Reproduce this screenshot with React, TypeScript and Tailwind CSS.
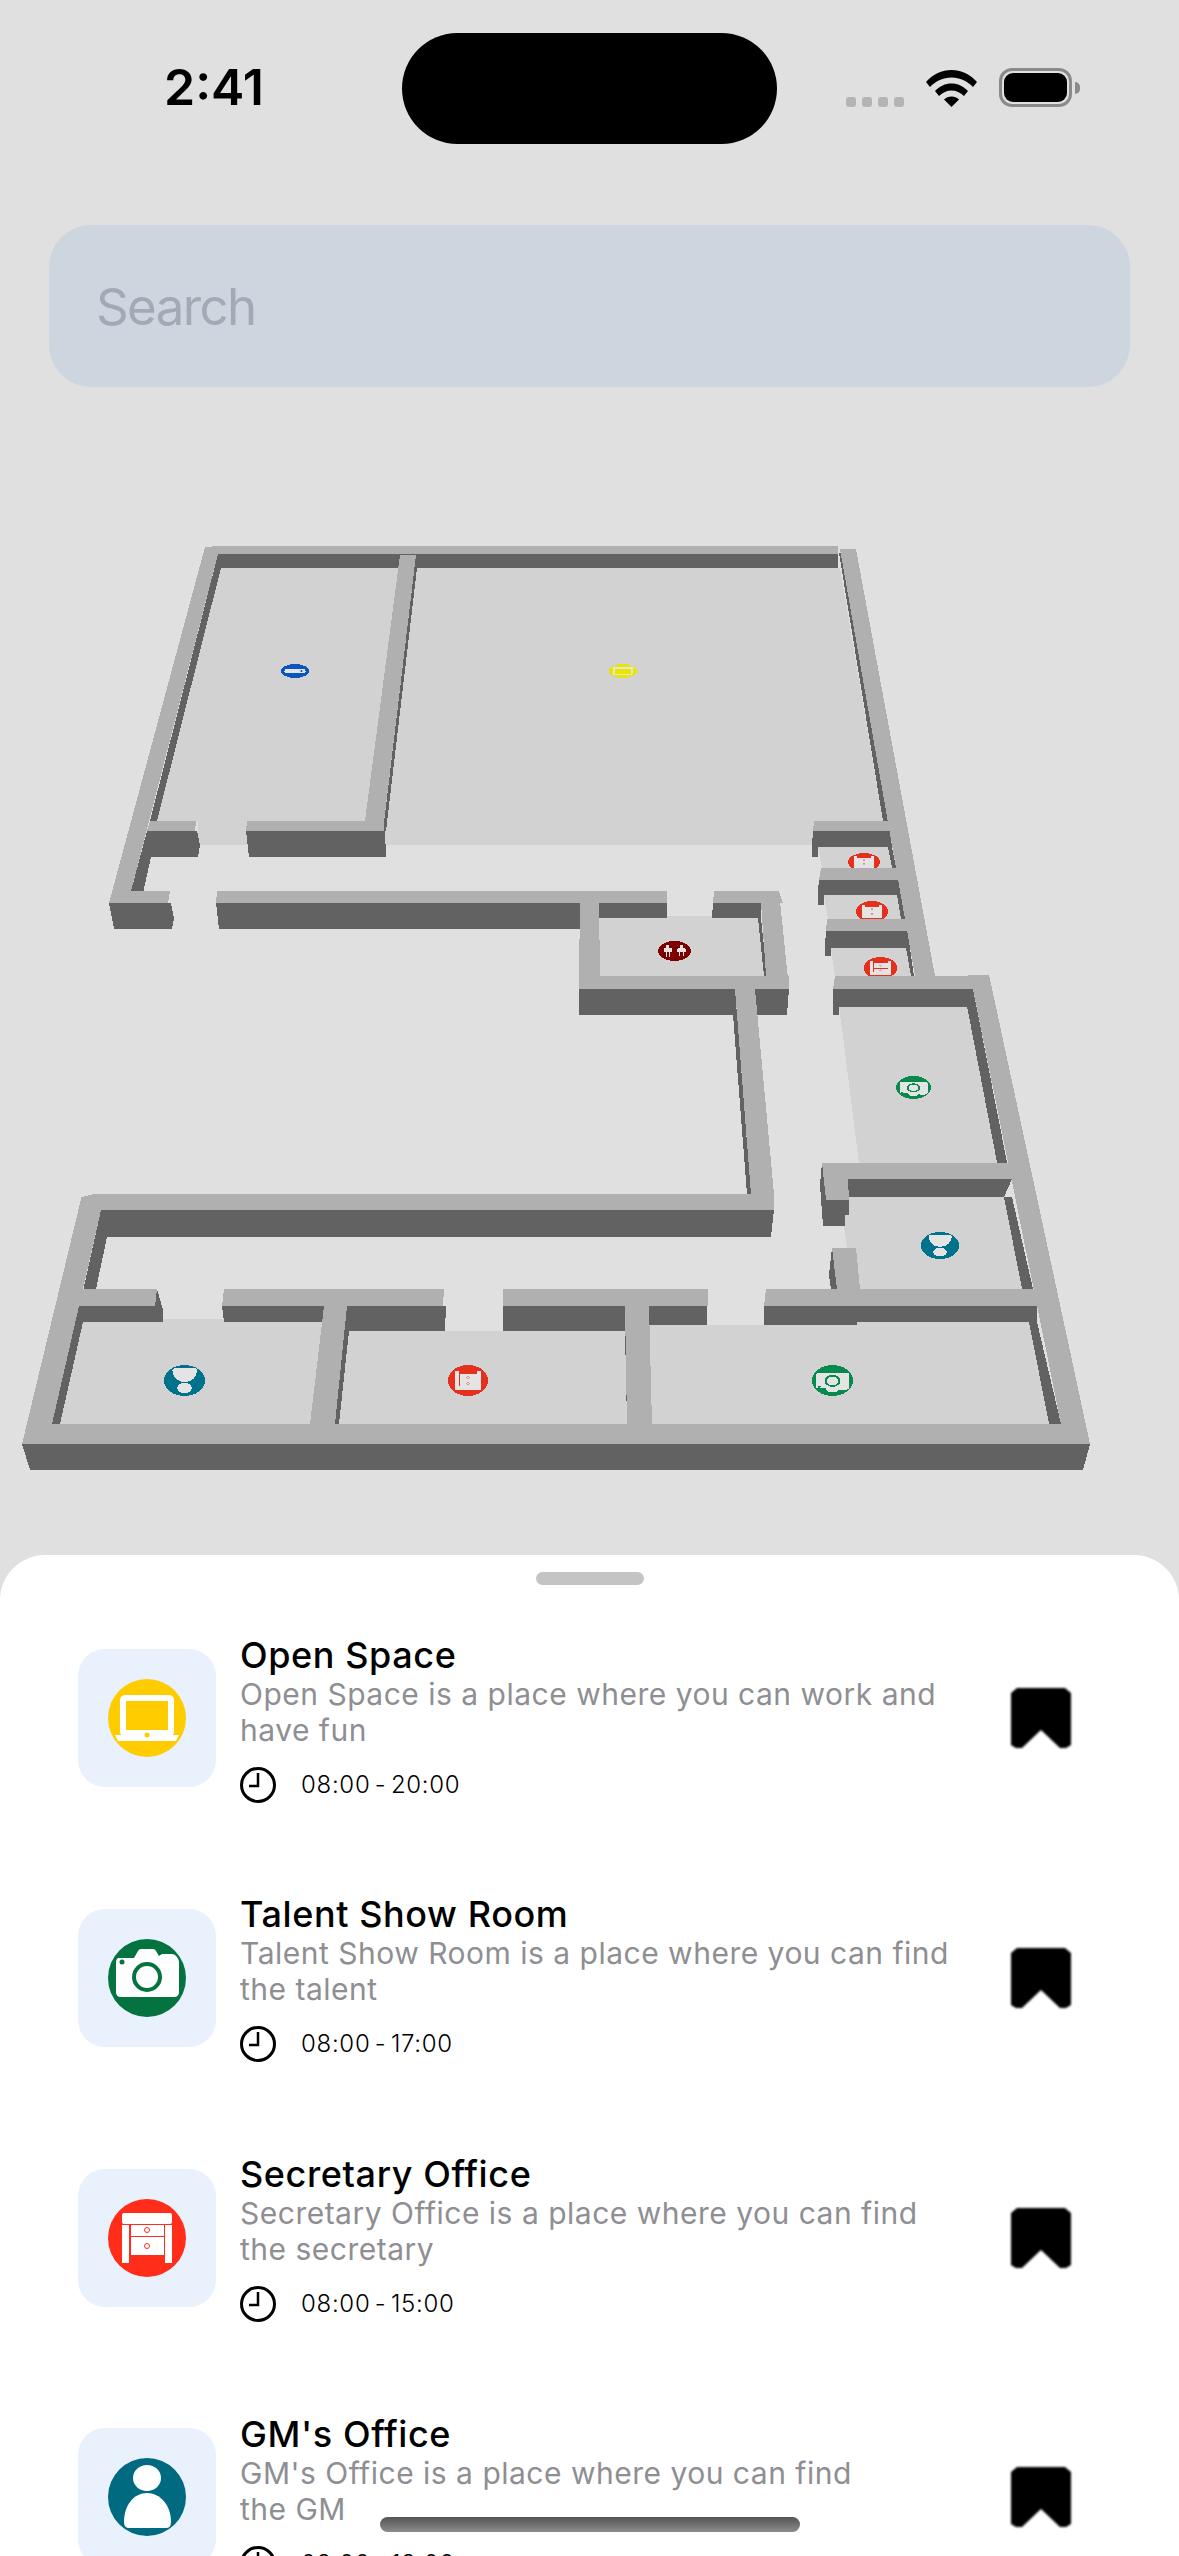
const floors = [
  '221,568 840,568 887,845 198,845 198,821 157,821',
  '818,847 888,847 896,868 822,868',
  '824,895 897,895 905,919 828,919',
  '831,948 906,948 914,976 835,976',
  '599,916 760,916 767,976 600,976',
  '839,1006 967,1006 997,1162.5 859,1162.5',
  '845,1197 1004,1197 1022,1289 860,1289 847,1248 844,1226',
  '83,1322 158,1322 158,1319 224,1319 224,1322 322,1322 310,1424 60,1424',
  '349,1331 625,1331 627,1424 339,1424',
  '649,1325 857,1325 857,1322 1029,1322 1049,1424 652,1424',
];

const sides = [
  '218,554 838,554 838,568 221,568',
  '218,554 221,568 157,821 150,821',
  '416,555 417,568 386,831 383,831',
  '839,553 845,553 890,821 883,821',
  '147,831 197,831 200,845 198,857 151,857',
  '147,831 151,857 143.5,891 131,891',
  '246,831 385,831 386,857 249,857',
  '109,903 171,903 174,918 172,929 114,929',
  '216,903 580,903 580,929 219,929',
  '599,903 667,903 667,918 599,918',
  '713,903 761,903 761,918 712,918',
  '758,918 761,918 767,976 764,976',
  '579,989 735,989 735,1015 579,1015',
  '755,989 789,989 787,1015 757,1015',
  '735,989 737,1015 751,1194 747,1194 733,1015',
  '813,831 890,831 892,847 818,847 818,857 812,857 812,845',
  '888,847 892,847 896,868 892,868',
  '819,880 900,880 901,895 824,895 824,905 818,905 818,890',
  '897,895 901,895 905,919 901,919',
  '826,931 909,931 910,948 831,948 831,956 825,956 825,945',
  '906,948 910,948 914,976 911,976',
  '833,989 973,989 967,1007 839,1007 839,1015 833,1015',
  '967,1006 973,989 1007,1162.5 997,1162.5',
  '822,1162.5 820,1185 823,1226 845,1226 845,1215 849,1215 849,1200 826,1200',
  '848,1179 1012,1179 1004,1197 848,1197',
  '1004,1197 1012,1197 1033,1289 1022,1289',
  '1029,1322 1037,1322 1061,1424 1049,1424',
  '832,1248 829,1275 831,1289 837,1289',
  '764,1306 1037,1306 1037,1322 857,1322 857,1325 764,1325',
  '222,1306 324,1306 324,1322 224,1322',
  '347,1306 446,1306 445,1331 349,1331',
  '78,1306 155,1306 157,1289 163,1310 163,1322 83,1322',
  '503,1306 625,1306 625,1331 503,1331',
  '649,1306 707,1306 707,1325 649,1325',
  '78,1306 83,1322 60,1424 52,1424',
  '347,1306 349,1331 339,1424 335,1424',
  '625,1331 627,1331 628,1424 627,1424',
  '101,1210 774,1210 771,1237 107,1237',
  '101,1210 107,1237 96,1289 83.5,1289',
  '22,1444 1090,1444 1083,1470 30,1470',
];

const tops = [
  '218,546 838,546 838,554 218,554',
  '205,547 218,546 218,554 131,891 170,891 168,903 109,903',
  '150,821 196,821 195,831 147,831',
  '400,555 416,555 384,821 365,821',
  '247,821 384,821 384,831 246,831',
  '217,891 667,891 667,903 216,903',
  '714,891 779,891 783,903 713,903',
  '761,903 779,891 789,989 767,989',
  '579,976 789,976 789,989 579,989',
  '580,903 599,903 600,976 579,976',
  '840,549 856,549 935,976 915,976',
  '814,821 890,821 890,831 813,831',
  '821,868 899,868 901,880 819,880',
  '827,919 908,919 910,931 826,931',
  '835,976 975,976 975,989 833,989',
  '968,974.5 989,974.5 1090,1444 1061,1424 973,989',
  '822,1162.5 1010,1162.5 1012,1179 848,1179 849,1200 826,1200',
  '735,989 755,989 774,1194 751,1194',
  '94,1194 774,1194 774,1210 101,1210',
  '81.5,1197 94,1194 101,1210 52,1424 22,1444',
  '83,1289 157,1289 155,1306 78,1306',
  '224,1289 444,1289 443,1306 222,1306',
  '503,1289 708,1289 708,1306 503,1306',
  '324,1306 347,1306 335,1424 310,1424',
  '625,1306 649,1306 652,1424 627,1424',
  '766,1289 1037,1289 1037,1306 764,1306',
  '832,1248 856,1248 860,1289 837,1289',
  '52,1424 1061,1424 1090,1444 22,1444',
];

type Kind = 'laptop' | 'camera' | 'drawer' | 'person' | 'gamepad' | 'plug';

// all glyphs drawn in a 78x78 box
function Glyph({ kind, color, light }: { kind: Kind; color: string; light: string }) {
  return (
    <>
      <circle cx="39" cy="39" r="39" fill={color} />
      {kind === 'laptop' && (
        <>
          <rect x="12" y="16" width="54" height="42" rx="5" fill={light} />
          <rect x="18" y="22" width="42" height="29" fill={color} />
          <path d="M7 56h64l-3 6H10z" fill={light} />
          <circle cx="39" cy="56" r="2.5" fill={color} />
        </>
      )}
      {kind === 'camera' && (
        <>
          <path
            d="M11 19h15l4-7q1-2 3-2h12q2 0 3 2l3 5 3-2h10q3 0 5 3 2 3 2 5v30q0 5-5 5H13q-5 0-5-5V24q0-5 3-5z"
            fill={light}
          />
          <circle cx="39" cy="38" r="13" fill="none" stroke={color} strokeWidth="4" />
          <circle cx="14" cy="23" r="2.5" fill={color} />
        </>
      )}
      {kind === 'drawer' && (
        <>
          <rect x="14" y="14" width="50" height="11" rx="2" fill={light} />
          <rect x="14" y="26" width="7" height="38" fill={light} />
          <rect x="57" y="26" width="7" height="38" fill={light} />
          <rect x="23" y="26" width="33" height="11" fill={light} />
          <rect x="23" y="38" width="33" height="18" fill={light} />
          <circle cx="39" cy="31" r="2.5" fill="none" stroke={color} />
          <circle cx="39" cy="47" r="2.5" fill="none" stroke={color} />
        </>
      )}
      {kind === 'person' && (
        <>
          <ellipse cx="39" cy="20" rx="14" ry="13" fill={light} />
          <path d="M16 64c0-17 10-29 23-29s24 12 24 29q0 6-5 6H21q-5 0-5-6z" fill={light} />
        </>
      )}
      {kind === 'gamepad' && (
        <>
          <path d="M12 28q10-4 16 2h22q6-6 16-2 5 8 1 20-10 6-17 0H28q-7 6-17 0-4-12 1-20z" fill={light} />
          <path d="M52 39h10M57 33v12" stroke={color} strokeWidth="3" />
        </>
      )}
      {kind === 'plug' && (
        <>
          <path d="M14 34h19v16h-6v14h-7V50h-6zM18 16h3v18h-3zM26 16h3v18h-3z" fill={light} />
          <path d="M46 36h19v12l-6 5v11h-7V53l-6-5zM50 18h3v18h-3zM58 18h3v18h-3z" fill={light} />
        </>
      )}
    </>
  );
}

const markers: { x0: number; y0: number; x1: number; y1: number; kind: Kind; color: string }[] = [
  { x0: 281, y0: 664, x1: 309, y1: 678, kind: 'gamepad', color: '#0a55c2' },
  { x0: 609, y0: 664, x1: 637, y1: 678, kind: 'laptop', color: '#e6e600' },
  { x0: 848, y0: 853, x1: 880, y1: 871, kind: 'drawer', color: '#e4301d' },
  { x0: 856, y0: 901, x1: 888, y1: 922, kind: 'drawer', color: '#e4301d' },
  { x0: 864, y0: 957, x1: 897, y1: 979, kind: 'drawer', color: '#e4301d' },
  { x0: 658, y0: 941, x1: 691, y1: 961, kind: 'plug', color: '#7d0000' },
  { x0: 896, y0: 1076, x1: 931, y1: 1099, kind: 'camera', color: '#068a4e' },
  { x0: 921, y0: 1232, x1: 959, y1: 1259, kind: 'person', color: '#00728c' },
  { x0: 164, y0: 1365, x1: 205, y1: 1396, kind: 'person', color: '#00728c' },
  { x0: 448, y0: 1365, x1: 488, y1: 1396, kind: 'drawer', color: '#e4301d' },
  { x0: 812, y0: 1365, x1: 853, y1: 1396, kind: 'camera', color: '#068a4e' },
];

function FloorMap() {
  return (
    <svg viewBox="0 387 1179 1168" className="block w-[1179px] h-[1168px]" shapeRendering="crispEdges">
      {floors.map((p) => (
        <polygon key={p} points={p} fill="#d2d2d2" />
      ))}
      {/* the map labels lie flipped on the floor plane */}
      {markers.map((m) => (
        <g
          key={`${m.x0}-${m.y0}`}
          transform={`translate(${m.x0} ${m.y1}) scale(${(m.x1 - m.x0) / 78} ${-(m.y1 - m.y0) / 78})`}
        >
          <Glyph kind={m.kind} color={m.color} light="#e4e4e4" />
        </g>
      ))}
      {sides.map((p) => (
        <polygon key={p} points={p} fill="#626262" />
      ))}
      {tops.map((p) => (
        <polygon key={p} points={p} fill="#b0b0b0" />
      ))}
    </svg>
  );
}

function StatusBar() {
  return (
    <div className="flex items-center pt-[33px]">
      <span className="ml-[164px] w-[238px] pb-[3px] text-[50px] leading-none font-semibold text-black">2:41</span>
      <div className="w-[375px] h-[111px] rounded-full bg-black" />
      <div className="ml-[69px] flex items-end gap-[22px] pb-[2px]">
        <div className="flex gap-[6px]">
          <span className="w-[10px] h-[10px] rounded-[3px] bg-[#b4b4b4]" />
          <span className="w-[10px] h-[10px] rounded-[3px] bg-[#b4b4b4]" />
          <span className="w-[10px] h-[10px] rounded-[3px] bg-[#b4b4b4]" />
          <span className="w-[10px] h-[10px] rounded-[3px] bg-[#b4b4b4]" />
        </div>
        <svg viewBox="0 0 51 37" className="w-[51px] h-[37px]" fill="black">
          <path d="M0 12C7 4 16 0 25.500 0S44 4 51 12l-4 5C41 11 34 7.500 25.500 7.500S10 11 4 17z" />
          <path d="M9 21c5-5 10-7.500 16.500-7.500S37 16 42 21l-4 5c-3.500-3.500-8-5.500-12.500-5.500S16.500 22.500 13 26z" />
          <path d="M18 29.500c2-2 4.500-3 7.500-3s5.500 1 7.500 3L25.500 37z" />
        </svg>
        <div className="flex items-center gap-[3px]">
          <div className="w-[73px] h-[39px] rounded-[13px] border-[3px] border-[#8a8a8a] p-[2px]">
            <div className="w-full h-full rounded-[9px] bg-black" />
          </div>
          <div className="w-[5px] h-[12px] rounded-r-full bg-[#8a8a8a]" />
        </div>
      </div>
    </div>
  );
}

const rooms: { name: string; desc: string; hours: string; kind: Kind; color: string }[] = [
  {
    name: 'Open Space',
    desc: 'Open Space is a place where you can work and\nhave fun',
    hours: '08:00 - 20:00',
    kind: 'laptop',
    color: '#ffcc00',
  },
  {
    name: 'Talent Show Room',
    desc: 'Talent Show Room is a place where you can find\nthe talent',
    hours: '08:00 - 17:00',
    kind: 'camera',
    color: '#04733f',
  },
  {
    name: 'Secretary Office',
    desc: 'Secretary Office is a place where you can find\nthe secretary',
    hours: '08:00 - 15:00',
    kind: 'drawer',
    color: '#ff2d1a',
  },
  {
    name: "GM's Office",
    desc: "GM's Office is a place where you can find\nthe GM",
    hours: '08:00 - 18:00',
    kind: 'person',
    color: '#006a80',
  },
];

function RoomRow({ room }: { room: (typeof rooms)[number] }) {
  return (
    <div className="flex items-center h-[168px] mb-[91.8px] shrink-0 pl-[78px]">
      <div className="w-[138px] h-[138px] rounded-[27px] bg-[#e9f1fc] flex items-center justify-center shrink-0">
        <svg viewBox="0 0 78 78" className="w-[78px] h-[78px]">
          <Glyph kind={room.kind} color={room.color} light="#ffffff" />
        </svg>
      </div>
      <div className="ml-[24px] w-[771px] shrink-0">
        <div className="text-[36px] leading-[42px] font-medium tracking-[0.6px] text-black">{room.name}</div>
        <div className="text-[30px] leading-[36px] tracking-[0.5px] text-[#8e8e93] whitespace-pre-line">
          {room.desc}
        </div>
        <div className="flex items-center mt-[19px] h-[36px]">
          <svg viewBox="0 0 36 36" className="w-[36px] h-[36px]" fill="none" stroke="black" strokeWidth="3">
            <circle cx="18" cy="18" r="16.500" />
            <path d="M18 6v13H9" strokeWidth="2.500" />
          </svg>
          <span className="ml-[25px] text-[24px] leading-none font-light tracking-[0.7px] [word-spacing:-3px] text-black">
            {room.hours}
          </span>
        </div>
      </div>
      <svg viewBox="0 0 60 60" className="w-[60px] h-[60px] blur-[1px] shrink-0">
        <path d="M6 0h48l6 5v52l-5 3h-6L30 42 11 60H5l-5-3V5z" fill="black" />
      </svg>
    </div>
  );
}

export default function App() {
  return (
    <div
      className="relative w-[1179px] h-[2556px] overflow-hidden bg-[#e0e0e0] flex flex-col"
      style={{ fontFamily: 'Inter, "Liberation Sans", sans-serif' }}
    >
      <StatusBar />
      <div className="mt-[81px] mx-[49px] h-[162px] rounded-[42px] bg-[#cdd5df] flex items-center px-[47px] shrink-0">
        <span className="text-[51px] leading-none tracking-[-1.6px] text-[#a3aab5]">Search</span>
      </div>
      <FloorMap />
      <div className="flex-1 min-h-0 bg-white rounded-t-[45px] flex flex-col items-stretch">
        <div className="mt-[17px] mx-auto w-[108px] h-[13px] rounded-full bg-[#c4c4c4] shrink-0" />
        <div className="mt-[49px] flex flex-col">
          {rooms.map((r) => (
            <RoomRow key={r.name} room={r} />
          ))}
        </div>
      </div>
      <div className="absolute left-[380px] top-[2517px] w-[420px] h-[15px] rounded-full bg-gradient-to-b from-[#555555] to-[#8c8c8c]" />
    </div>
  );
}
